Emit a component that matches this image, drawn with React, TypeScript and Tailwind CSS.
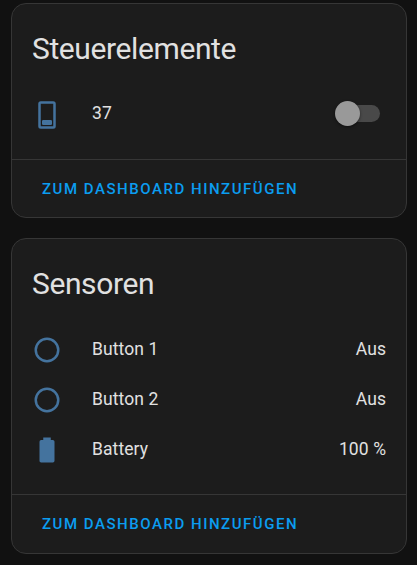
import React from 'react';

interface RowProps {
  icon: string;
  name: string;
}

interface EntityCardProps {
  title: string;
  children: React.ReactNode;
}

const ICONS = {
  switchOff:
    'M17,1H7A2,2 0 0,0 5,3V21A2,2 0 0,0 7,23H17A2,2 0 0,0 19,21V3A2,2 0 0,0 17,1M17,21H7V3H17V21M15,20H9A1,1 0 0,1 8,19V17A1,1 0 0,1 9,16H15A1,1 0 0,1 16,17V19A1,1 0 0,1 15,20Z',
  circle:
    'M12,20A8,8 0 0,1 4,12A8,8 0 0,1 12,4A8,8 0 0,1 20,12A8,8 0 0,1 12,20M12,2A10,10 0 0,0 2,12A10,10 0 0,0 12,22A10,10 0 0,0 22,12A10,10 0 0,0 12,2Z',
  battery:
    'M16.67,4H15V2H9V4H7.33A1.33,1.33 0 0,0 6,5.33V20.67C6,21.4 6.6,22 7.33,22H16.67A1.33,1.33 0 0,0 18,20.67V5.33C18,4.6 17.4,4 16.67,4Z',
};

function EntityIcon({ path }: { path: string }) {
  return (
    <svg viewBox="0 0 24 24" className="mr-[30px] size-[30px] fill-[#44739e]">
      <path d={path} />
    </svg>
  );
}

/* Switch in its off position */
function Toggle() {
  return (
    <button role="switch" aria-checked="false" className="mr-[6px] mb-[3px] flex h-[25px] w-[45px] items-center">
      <span className="z-10 size-[25px] shrink-0 rounded-full bg-[#999999] shadow-[0_1px_3px_rgba(0,0,0,0.5)]" />
      <span className="-ml-[23px] h-[17px] w-[43px] rounded-full bg-[#494949]" />
    </button>
  );
}

function SwitchRow({ icon, name }: RowProps) {
  return (
    <div className="flex h-[50px] items-center">
      <EntityIcon path={icon} />
      <span className="flex-1 pb-[3px] tracking-[0.08px]">{name}</span>
      <Toggle />
    </div>
  );
}

function SensorRow({ icon, name, value }: RowProps & { value: string }) {
  return (
    <div className="flex h-[50px] items-center">
      <EntityIcon path={icon} />
      <span className="flex-1 pb-px tracking-[0.08px]">{name}</span>
      <span className="-mr-[0.3px] pb-px tracking-[0.15px]">{value}</span>
    </div>
  );
}

function EntityCard({ title, children }: EntityCardProps) {
  return (
    <section className="rounded-[15px] border border-[#363636] bg-[#1c1c1c] last:pb-px">
      <h1 className="px-5 pt-[15px] pb-[11px] text-[30px] leading-[60px] font-normal tracking-[-0.39px]">
        {title}
      </h1>
      <div className="px-5 pb-[19px]">{children}</div>
      <div className="flex h-[58px] items-center border-t border-[#363636] px-[30px]">
        <button className="text-[15px] leading-5 font-medium tracking-[1.53px] text-[#0b9df0]">
          ZUM DASHBOARD HINZUFÜGEN
        </button>
      </div>
    </section>
  );
}

export default function App() {
  return (
    <main className="flex h-[565px] flex-col gap-5 bg-[#111111] pt-[3px] pr-[10px] pl-[11px] font-[Roboto,sans-serif] text-[17.5px] leading-[25px] text-[#e1e1e1]">
      <EntityCard title="Steuerelemente">
        <SwitchRow icon={ICONS.switchOff} name="37" />
      </EntityCard>
      <EntityCard title="Sensoren">
        <SensorRow icon={ICONS.circle} name="Button 1" value="Aus" />
        <SensorRow icon={ICONS.circle} name="Button 2" value="Aus" />
        <SensorRow icon={ICONS.battery} name="Battery" value="100 %" />
      </EntityCard>
    </main>
  );
}
